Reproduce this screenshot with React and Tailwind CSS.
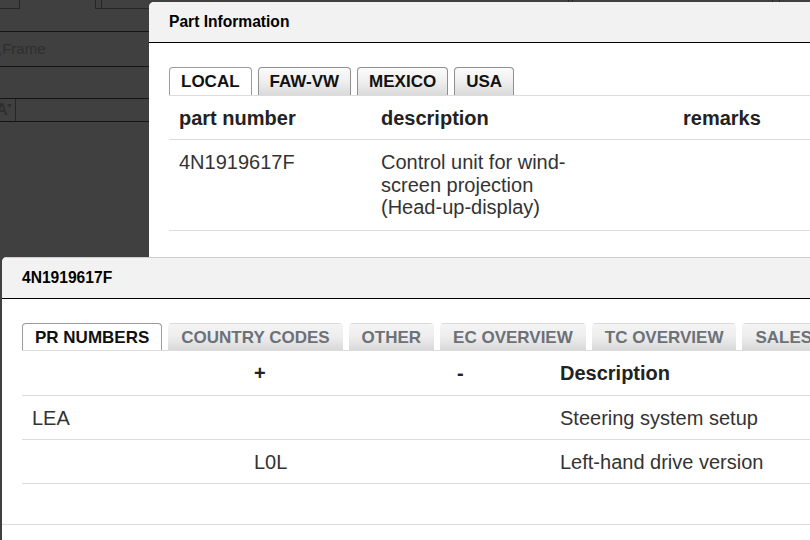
const partTabs = ["LOCAL", "FAW-VW", "MEXICO", "USA"];
const prTabs = ["PR NUMBERS", "COUNTRY CODES", "OTHER", "EC OVERVIEW", "TC OVERVIEW", "SALES TYPES"];

const prRows = [
  { code: "LEA", plus: "", minus: "", text: "Steering system setup" },
  { code: "", plus: "L0L", minus: "", text: "Left-hand drive version" },
];

const Backdrop = () => (
  <div className="flex h-full flex-col text-[#2f2f2f]">
    <div className="flex h-[9px] items-start">
      <div className="h-[9px] w-[20px] border-b border-r border-[#262626]" />
      <div className="ml-[75px] flex h-[9px] w-[54px] border-b border-l border-[#262626]">
        <div className="ml-[5px] h-full w-px bg-[#262626]" />
      </div>
      <div className="ml-[419px] flex h-[2px] w-[5px] border-x border-[#262626]" />
      <div className="ml-[199px] flex h-[2px] w-[8px] border-x border-[#262626]" />
    </div>
    <div className="h-[22px]" />
    <div className="flex h-[35px] items-center border-t border-[#151515] text-[15px]">
      <span className="-ml-[2px]">,Frame</span>
    </div>
    <div className="h-[32px] border-t border-[#151515]" />
    <div className="flex h-[24px] border-y border-[#151515]">
      <div className="relative flex w-[16px] items-center border-r border-[#262626] text-[16px] font-bold">
        <span className="-ml-[4px]">A</span>
        <span className="absolute right-[2px] top-[3px] text-[7px] leading-none">▼</span>
      </div>
    </div>
  </div>
);

const Tab = ({ label, active, muted }) => (
  <div
    className={
      active
        ? "flex shrink-0 items-center whitespace-nowrap rounded-t-[4px] border border-b-0 border-[#9a9a9a] bg-white text-[#111]"
        : muted
          ? "flex shrink-0 items-center whitespace-nowrap rounded-t-[4px] border border-b-0 border-transparent bg-gradient-to-b from-[#f4f4f4] via-[#ededed] to-[#d9d9d9] text-[#6c7177]"
          : "flex shrink-0 items-center whitespace-nowrap rounded-t-[4px] border border-b-0 border-[#8f8f8f] bg-gradient-to-b from-[#fbfbfb] via-[#efefef] to-[#dadada] text-[#111]"
    }
  >
    <span className={muted ? "px-3 text-[17px] font-bold leading-none" : "px-[11px] text-[17px] font-bold leading-none"}>
      {label}
    </span>
  </div>
);

const PartInformation = () => (
  <div className="absolute left-[149px] top-[2px] h-[300px] w-[690px] overflow-hidden rounded-tl-[5px] bg-white">
    <div className="flex h-[41px] items-center border-b border-black bg-[#f2f2f2] px-5 text-[15.6px] font-bold text-black">
      Part Information
    </div>
    <div className="pl-5 pt-6">
      <div className="flex h-[29px] gap-[6px] border-b border-[#dcdcdc]">
        {partTabs.map((tab, i) => (
          <Tab label={tab} active={i === 0} key={tab} />
        ))}
      </div>
      <div className="grid h-[44px] grid-cols-[202px_302px_1fr] items-center border-b border-[#dcdcdc] text-[20px] font-bold text-[#222]">
        <span className="pl-[10px]">part number</span>
        <span className="pl-[10px]">description</span>
        <span className="pl-[10px]">remarks</span>
      </div>
      <div className="grid grid-cols-[202px_302px_1fr] border-b border-[#dcdcdc] py-[11px] text-[20px] leading-[22.5px] text-[#333]">
        <span className="pl-[10px]">4N1919617F</span>
        <span className="max-w-[220px] pl-[10px]">Control unit for wind-screen projection (Head-up-display)</span>
        <span />
      </div>
    </div>
  </div>
);

const PrNumbers = () => (
  <div className="absolute left-[2px] top-[257px] h-[300px] w-[840px] overflow-hidden rounded-tl-[5px] bg-white">
    <div className="flex h-[42px] items-center border-b border-t border-b-black border-t-[#cdcdcd] bg-[#f2f2f2] px-5 text-[15.6px] font-bold text-black">
      4N1919617F
    </div>
    <div className="pb-[40px] pl-5 pt-6">
      <div className="flex h-[28px] gap-[6px] border-b border-[#dcdcdc]">
        {prTabs.map((tab, i) => (
          <Tab label={tab} active={i === 0} muted key={tab} />
        ))}
      </div>
      <div className="grid h-[45px] grid-cols-[222px_203px_103px_1fr] items-center border-b border-[#dcdcdc] text-[20px] font-bold text-[#222]">
        <span className="pl-[10px]" />
        <span className="pl-[10px]">+</span>
        <span className="pl-[10px]">-</span>
        <span className="pl-[10px]">Description</span>
      </div>
      {prRows.map((row) => (
        <div
          className="grid h-[44px] grid-cols-[222px_203px_103px_1fr] items-center border-b border-[#dcdcdc] text-[20px] text-[#333]"
          key={row.text}
        >
          <span className="pl-[10px]">{row.code}</span>
          <span className="pl-[10px]">{row.plus}</span>
          <span className="pl-[10px]">{row.minus}</span>
          <span className="pl-[10px]">{row.text}</span>
        </div>
      ))}
    </div>
    <div className="h-[40px] border-t border-[#dcdcdc]" />
  </div>
);

export default function App() {
  return (
    <div className="relative h-[540px] w-[810px] overflow-hidden bg-[#404040] font-['Liberation_Sans',Arial,sans-serif]">
      <Backdrop />
      <PartInformation />
      <PrNumbers />
    </div>
  );
}
